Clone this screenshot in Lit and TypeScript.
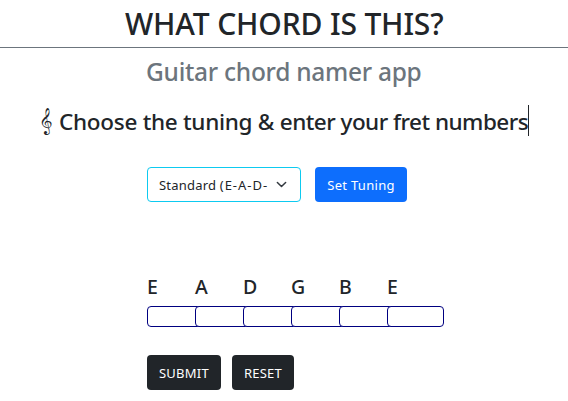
import { LitElement, html, css } from "lit";
import { customElement } from "lit/decorators.js";

@customElement("app-root")
export class AppRoot extends LitElement {
  static styles = css`
    :host { display: block; height: 401px; overflow: hidden; background: #fff; color: #212529;
      font-family: "Noto Sans", "Open Sans", sans-serif; font-size: 13px; }
    * { box-sizing: border-box; }
    h1, h2, h3 { margin: 0; font-weight: 500; white-space: nowrap; }
    h1 { height: 48px; border-bottom: 1px solid #6c757d; font-size: 30px; line-height: 47px; padding-left: 125px; letter-spacing: -0.15px; }
    h2 { height: 46px; font-size: 24.5px; line-height: 47px; padding-left: 146px; color: #6c757d; letter-spacing: -0.27px; }
    h3 { display: flex; align-items: center; height: 31px; margin-top: 11px; padding-left: 38px; font-size: 22.5px; line-height: 33px; }
    .clef { width: 21px; padding-left: 1px; font-family: "DejaVu Sans", "Noto Sans", sans-serif; font-weight: 400; line-height: 35px; }
    .typed { width: 470px; height: 31px; border-right: 1px solid #212529; letter-spacing: -0.52px; }
    .lead { letter-spacing: -0.28px; }
    .controls { padding-left: 147px; }
    .row { display: flex; }
    .tuning { gap: 14px; margin-top: 31px; }
    .select { display: flex; align-items: center; width: 154px; height: 35px; border: 1px solid #0dcaf0; border-radius: 4px; padding: 0 13px 0 11px; justify-content: space-between; white-space: nowrap; }
    .value { letter-spacing: 0.2px; }
    .notes { letter-spacing: 1px; }
    button { height: 35px; padding: 0; border: 0; border-radius: 4px; font: inherit; color: #fff; background: #212529; white-space: nowrap; }
    .set { width: 92px; background: #0d6efd; letter-spacing: 0.3px; }
    .strings { display: grid; grid-template-columns: repeat(6, 48px); margin-top: 72px; }
    .name { font-size: 19.5px; font-weight: 500; height: 26px; line-height: 26px; }
    .fret { display: block; width: 57px; height: 21px; margin-top: 6px; border: 1px solid #000080; border-radius: 4px; background: #fff; padding: 0; }
    .actions { gap: 11px; margin-top: 28px; }
    .submit { width: 74px; letter-spacing: 0.25px; }
    .reset { width: 62px; letter-spacing: 0.25px; }
  `;

  render() {
    return html`
      <h1><span>WHAT CHORD IS THIS?</span></h1>
      <h2><span>Guitar chord namer app</span></h2>
      <h3><span class="clef">𝄞</span><span class="typed"><span class="lead">Choose the tuning &amp; </span>enter your fret numbers</span></h3>
      <div class="controls">
        <div class="row tuning">
          <div class="select"><span class="value">Standard <span class="notes">(E-A-D-</span></span>
            <svg width="11" height="11" viewBox="0 0 16 16" fill="none" stroke="#343a40" stroke-width="2.2" stroke-linecap="round" stroke-linejoin="round"><path d="m2 5 6 6 6-6" /></svg>
          </div>
          <button class="set">Set Tuning</button>
        </div>
        <div class="strings">
          ${["E", "A", "D", "G", "B", "E"].map((n) => html`<div><div class="name">${n}</div><input class="fret" aria-label=${n} /></div>`)}
        </div>
        <div class="row actions">
          <button class="submit">SUBMIT</button>
          <button class="reset">RESET</button>
        </div>
      </div>
    `;
  }
}
